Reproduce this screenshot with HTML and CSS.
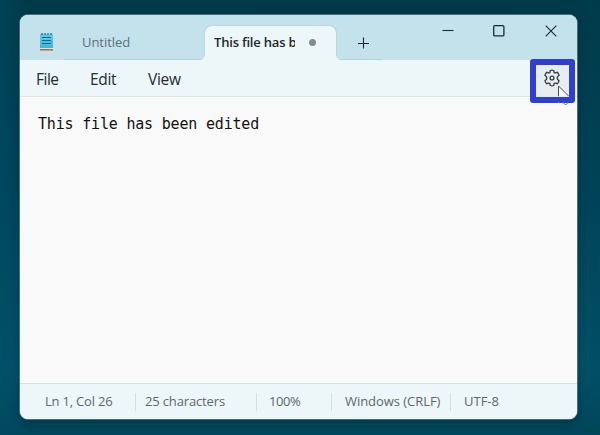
FILE: index.html
```html
<!DOCTYPE html>
<html lang="en">
<head>
<meta charset="utf-8">
<title>Notepad</title>
<link rel="stylesheet" href="styles.css">
</head>
<body>
<main class="window">
  <header class="titlebar">
    <svg class="app-icon" width="16" height="20" viewBox="0 0 16 20">
      <defs><linearGradient id="pad" x2="0" y2="1"><stop stop-color="#64cbe7"/><stop offset="1" stop-color="#43b4d7"/></linearGradient></defs>
      <path d="M1 15h13v3H1z" fill="#d9e4e7"/>
      <path d="M1 17h13v1.5H1z" fill="#bd692e"/>
      <path d="M1 2h13v14H1z" fill="url(#pad)"/>
      <path d="M3 1v2M6 1v2M9 1v2M12 1v2" stroke="#287d9b" stroke-width="1.4"/>
      <path d="M3 5.5h9M3 8.5h9M3 11.5h9" stroke="#08718e" stroke-width="1.1"/>
    </svg>
    <div class="tab">Untitled</div>
    <div class="tab active"><span class="tab-name">This file has b</span><i class="dot"></i></div>
    <div class="new-tab"><svg width="12" height="12" viewBox="0 0 12 12"><path d="M6.5 .5v11M1 6.5h11"/></svg></div>
    <div class="controls">
      <svg width="12" height="12" viewBox="0 0 12 12"><path d="M.5 5.5h11"/></svg>
      <svg width="12" height="12" viewBox="0 0 12 12"><rect x=".7" y=".7" width="10.2" height="10.2" rx="1" stroke-width="1.3"/></svg>
      <svg width="12" height="12" viewBox="0 0 12 12"><path d="M.7.7l10.6 10.6M11.3.7L.7 11.3"/></svg>
    </div>
  </header>
  <nav class="menubar"><span class="file">File</span><span class="edit">Edit</span><span class="view">View</span></nav>
  <section class="editor">This file has been edited</section>
  <footer class="status">
    <span class="position">Ln 1, Col 26</span>
    <span class="count">25 characters</span>
    <span class="zoom">100%</span>
    <span class="ending">Windows (CRLF)</span>
    <span class="encoding">UTF-8</span>
  </footer>
  <div class="settings">
    <svg width="18" height="18" viewBox="0 0 18 18"><path d="M7.3 1.5Q9 .8 10.7 1.5L11.1 3.4Q11.5 4.1 12.4 3.9L14.3 3.3Q15.7 4.5 16 6.2L14.6 7.7Q13.6 9 14.6 10.3L16 11.8Q15.5 13.6 14.3 14.7L12.4 14.1Q11.5 13.9 11.1 14.6L10.7 16.5Q9 17.2 7.3 16.5L6.9 14.6Q6.5 13.9 5.6 14.1L3.7 14.7Q2.4 13.5 2 11.8L3.4 10.3Q4.4 9 3.4 7.7L2 6.2Q2.5 4.4 3.7 3.3L5.6 3.9Q6.5 4.1 6.9 3.4Z"/><circle cx="9" cy="9" r="1.9"/></svg>
  </div>
  <svg class="cursor" width="14" height="21" viewBox="0 0 14 21"><path d="M1.5 11.2V1l10.2 10.2" fill="#f5f8fa" stroke="#4b4f55"/><path d="M1 17.5l1.5-.3M5 17.5l1 .5M6.5 17.5q.8 2.5 2.5 2t1.5-2" fill="none" stroke="#777b94"/></svg>
</main>
</body>
</html>
```
FILE: styles.css
```css
* { box-sizing: border-box; }
body {
  margin: 0;
  width: 600px;
  height: 435px;
  overflow: hidden;
  padding: 15px 23px 16px 20px;
  background: linear-gradient(90deg, rgba(0,78,105,.45), transparent 5%, transparent 94%, rgba(0,70,85,.2)), linear-gradient(180deg, #003947, #004258 45%, #00516a 85%, #004559);
  font-family: "Open Sans", "Noto Sans", sans-serif;
}
.window {
  position: relative;
  width: 557px;
  height: 404px;
  display: flex;
  flex-direction: column;
  border-radius: 8px;
  background: #f9f9f9;
  box-shadow: 0 0 0 1px #47727d, 0 4px 9px rgba(0,20,30,.35);
}
svg { display: block; flex: none; }
.titlebar {
  display: flex;
  align-items: flex-end;
  height: 45px;
  flex: none;
  background: #c4e2ec;
  border-radius: 8px 8px 0 0;
}
.app-icon { margin: 0 9px 8px 19px; }
.tab {
  width: 140px;
  height: 35px;
  padding: 7px 0 0 18px;
  border-bottom: 1px solid #b2d3de;
  color: #5b7179;
  font-size: 13px;
  line-height: 20px;
  letter-spacing: -.05px;
}
.tab.active {
  position: relative;
  display: flex;
  width: 133px;
  padding: 6px 0 0 9px;
  background: #edf6f9;
  color: #1e282c;
  font-weight: 600;
  border: 1px solid #b8d8e2;
  border-bottom: 0;
  border-radius: 8px 8px 0 0;
}
.tab.active::before, .tab.active::after {
  content: "";
  position: absolute;
  bottom: 0;
  width: 4px;
  height: 4px;
}
.tab.active::before { left: -4px; background: radial-gradient(circle at 0 0, transparent 3px, #edf6f9 4px); }
.tab.active::after { right: -4px; background: radial-gradient(circle at 100% 0, transparent 3px, #edf6f9 4px); }
.tab-name { width: 81px; overflow: hidden; white-space: nowrap; letter-spacing: -.2px; }
.dot { width: 7px; height: 7px; margin: 7px 0 0 14px; border-radius: 50%; background: #858b8f; }
.new-tab { width: 45px; height: 35px; padding: 12px 0 0 20px; border-bottom: 1px solid #b2d3de; }
.new-tab svg, .controls svg { fill: none; stroke: #1c292e; stroke-width: 1.1; }
.controls { display: flex; gap: 40px; margin: 0 20px 23px auto; }
.controls svg:first-child { margin-right: -1px; }
.menubar {
  display: flex;
  height: 37px;
  flex: none;
  padding: 7px 16px;
  background: #edf6f9;
  border-bottom: 1px solid #dbe8eb;
  color: #242b2e;
  font-size: 15.5px;
  line-height: 24px;
}
.file { width: 54px; letter-spacing: -.5px; }
.edit { width: 58px; letter-spacing: -.35px; }
.view { letter-spacing: -.3px; }
.editor {
  flex: 1;
  padding: 17px 18px;
  color: #111;
  font: 15px/20px "DejaVu Sans Mono", monospace;
  letter-spacing: -.19px;
  white-space: pre;
}
.status {
  display: flex;
  align-items: center;
  height: 36px;
  flex: none;
  padding-left: 25px;
  background: #edf6f9;
  border-top: 1px solid #d6e2e5;
  border-radius: 0 0 8px 8px;
  color: #5e686c;
  font-size: 13px;
  white-space: nowrap;
}
.status span { height: 18px; line-height: 17px; }
.status span + span { border-left: 1px solid #d4dfe2; padding-left: 9px; }
.position { width: 90px; letter-spacing: -.2px; }
.count { width: 121px; letter-spacing: -.15px; }
.status .zoom { width: 75px; padding-left: 12px; letter-spacing: -.4px; }
.status .ending { width: 119px; padding-left: 13px; letter-spacing: -.05px; }
.status .encoding { padding-left: 13px; letter-spacing: 0; }
.settings {
  position: absolute;
  left: 510px;
  top: 44px;
  width: 45px;
  height: 44px;
  border: 6px solid #303fd1;
  border-radius: 3px;
  background: #e6eef1;
}
.settings svg { margin: 4px 0 0 7px; fill: none; stroke: #343c40; stroke-width: 1.3; }
.cursor { position: absolute; left: 537px; top: 70px; }
```
